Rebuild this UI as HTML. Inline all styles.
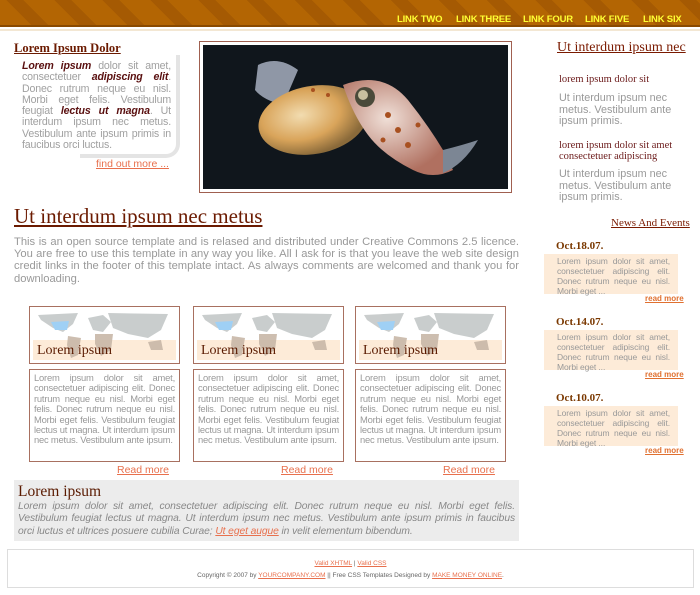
<!DOCTYPE html>
<html><head><meta charset="utf-8">
<style>
*{margin:0;padding:0;box-sizing:border-box}
body{width:700px;height:595px;background:#fff;position:relative;overflow:hidden;font-family:"Liberation Sans",sans-serif;color:#999}
.a{position:absolute}
.serif{font-family:"Liberation Serif",serif}
#hdr{left:0;top:0;width:700px;height:27px;background:repeating-linear-gradient(45deg,#b36503 0 22px,#a55a03 22px 34px);border-bottom:2px solid #8a4a00}
.nav{top:14px;font-size:9.5px;font-weight:bold;color:#ffff33;letter-spacing:-0.2px}
.gt{font-size:10.6px;line-height:11.3px;text-align:justify;color:#a0a0a0;letter-spacing:-0.15px}
.gt b{color:#5a1010;font-style:italic}
.lnk{color:#e8704d;text-decoration:underline}
.box{border:1px solid #a87060}
.mt{font-size:9.4px;line-height:10.4px;text-align:justify;color:#999;letter-spacing:-0.2px}
.rt{font-size:10.8px;line-height:11.5px;color:#999}
.rh{font-size:10.5px;line-height:11px;color:#6b1a1a}
.nd{font-size:11px;font-weight:bold;color:#7a3800}
.nb{background:#fdebd8;font-size:8.5px;line-height:10px;color:#999;text-align:justify;padding:2px 8px 0 13px;letter-spacing:-0.1px}
.rm{font-size:8px;color:#e07030;text-decoration:underline;font-weight:bold}
</style></head><body>
<div id="hdr" class="a"></div><div class="a" style="left:0;top:29px;width:700px;height:2px;background:#f3e7d3"></div>
<div class="a nav" style="left:397px">LINK TWO</div>
<div class="a nav" style="left:456px">LINK THREE</div>
<div class="a nav" style="left:523px">LINK FOUR</div>
<div class="a nav" style="left:585px">LINK FIVE</div>
<div class="a nav" style="left:643px">LINK SIX</div>

<div class="a serif" style="left:14px;top:41px;font-size:12.5px;font-weight:bold;color:#6b1a00;text-decoration:underline">Lorem Ipsum Dolor</div>
<div class="a" style="left:80px;top:55px;width:100px;height:103px;border-right:4px solid #e4e4e4;border-bottom:4px solid #e4e4e4;border-radius:0 0 14px 0"></div>
<div class="a gt" style="left:22px;top:61px;width:149px">
<b>Lorem ipsum</b> dolor sit amet, consectetuer <b>adipiscing elit</b>. Donec rutrum neque eu nisl. Morbi eget felis. Vestibulum feugiat <b>lectus ut magna</b>. Ut interdum ipsum nec metus. Vestibulum ante ipsum primis in faucibus orci luctus.</div>
<div class="a lnk" style="left:96px;top:158px;font-size:10.5px">find out more ...</div>

<div class="a" style="left:199px;top:41px;width:313px;height:152px;border:1px solid #a06050;padding:3px">
<svg width="305" height="144" viewBox="0 0 305 144" style="display:block">
<defs><radialGradient id="bd" cx="40%" cy="40%" r="60%"><stop offset="0" stop-color="#f2dcb0"/><stop offset="0.6" stop-color="#d9a45a"/><stop offset="1" stop-color="#8a6a3a"/></radialGradient>
<radialGradient id="hd" cx="40%" cy="40%" r="60%"><stop offset="0" stop-color="#f0e0d8"/><stop offset="1" stop-color="#b07060"/></radialGradient></defs>
<rect width="305" height="144" fill="#10161c"/>
<path d="M55 20 Q75 10 95 25 L80 60 Q60 55 52 45Z" fill="#8f97a6"/>
<ellipse cx="110" cy="75" rx="55" ry="34" fill="url(#bd)" transform="rotate(-10 110 75)"/>
<path d="M140 40 Q180 25 205 55 Q225 80 240 105 L250 125 Q230 135 210 125 Q180 110 165 90 Q150 70 140 40Z" fill="url(#hd)"/>
<path d="M240 105 Q260 100 275 95 Q260 120 240 128Z" fill="#7c8694"/>
<circle cx="162" cy="52" r="10" fill="#4a4a3a"/><circle cx="160" cy="50" r="5" fill="#c8c0a0"/>
<g fill="#a85020"><circle cx="185" cy="70" r="3"/><circle cx="195" cy="85" r="3"/><circle cx="205" cy="100" r="3"/><circle cx="180" cy="95" r="2.5"/><circle cx="215" cy="80" r="2.5"/><circle cx="125" cy="50" r="2"/><circle cx="110" cy="45" r="2"/></g>
</svg></div>

<div class="a serif" style="left:557px;top:40px;font-size:14px;color:#7a1a00;text-decoration:underline">Ut interdum ipsum nec</div>
<div class="a serif rh" style="left:559px;top:74px">lorem ipsum dolor sit</div>
<div class="a rt" style="left:559px;top:93px;width:120px">Ut interdum ipsum nec metus. Vestibulum ante ipsum primis.</div>
<div class="a serif rh" style="left:559px;top:140px;width:135px">lorem ipsum dolor sit amet consectetuer adipiscing</div>
<div class="a rt" style="left:559px;top:169px;width:120px">Ut interdum ipsum nec metus. Vestibulum ante ipsum primis.</div>

<div class="a serif" style="left:611px;top:217px;font-size:11px;color:#7a1a00;text-decoration:underline">News And Events</div>
<div class="a serif nd" style="left:556px;top:240px">Oct.18.07.</div>
<div class="a nb" style="left:544px;top:254px;width:134px;height:40px">Lorem ipsum dolor sit amet, consectetuer adipiscing elit. Donec rutrum neque eu nisl. Morbi eget ...</div>
<div class="a rm" style="left:645px;top:294px">read more</div>
<div class="a serif nd" style="left:556px;top:316px">Oct.14.07.</div>
<div class="a nb" style="left:544px;top:330px;width:134px;height:40px">Lorem ipsum dolor sit amet, consectetuer adipiscing elit. Donec rutrum neque eu nisl. Morbi eget ...</div>
<div class="a rm" style="left:645px;top:370px">read more</div>
<div class="a serif nd" style="left:556px;top:392px">Oct.10.07.</div>
<div class="a nb" style="left:544px;top:406px;width:134px;height:40px">Lorem ipsum dolor sit amet, consectetuer adipiscing elit. Donec rutrum neque eu nisl. Morbi eget ...</div>
<div class="a rm" style="left:645px;top:446px">read more</div>

<div class="a serif" style="left:14px;top:204px;font-size:21px;color:#6b1a00;text-decoration:underline">Ut interdum ipsum nec metus</div>
<div class="a gt" style="left:14px;top:236px;width:505px;font-size:11.2px;line-height:12.2px;color:#999;letter-spacing:0">This is an open source template and is relased and distributed under Creative Commons 2.5 licence. You are free to use this template in any way you like. All I ask for is that you leave the web site design credit links in the footer of this template intact. As always comments are welcomed and thank you for downloading.</div>

<div class="a box" style="left:29px;top:306px;width:151px;height:58px;padding:3px"><svg width="143" height="50" viewBox="0 0 143 50" style="display:block"><rect width="143" height="50" fill="#fff"/><rect y="30" width="143" height="20" fill="#fdebd8"/><g fill="#c4c8c8" opacity=".9"><path d="M5 5 L45 3 L40 14 L30 22 L20 18 L8 10Z"/><path d="M35 26 L48 28 L45 45 L38 48 L34 35Z" fill="#c8b8a8"/><path d="M55 8 L70 5 L78 12 L70 22 L60 20Z"/><path d="M62 24 L80 24 L78 40 L68 46 L62 34Z" fill="#c8b8a8"/><path d="M75 3 L135 4 L128 20 L115 28 L95 24 L80 18Z"/><path d="M115 32 L128 30 L130 40 L118 40Z" fill="#c8b8a8"/></g><path d="M18 12 L36 11 L34 20 L22 20Z" fill="#9fd0f5"/></svg></div>
<div class="a box" style="left:193px;top:306px;width:151px;height:58px;padding:3px"><svg width="143" height="50" viewBox="0 0 143 50" style="display:block"><rect width="143" height="50" fill="#fff"/><rect y="30" width="143" height="20" fill="#fdebd8"/><g fill="#c4c8c8" opacity=".9"><path d="M5 5 L45 3 L40 14 L30 22 L20 18 L8 10Z"/><path d="M35 26 L48 28 L45 45 L38 48 L34 35Z" fill="#c8b8a8"/><path d="M55 8 L70 5 L78 12 L70 22 L60 20Z"/><path d="M62 24 L80 24 L78 40 L68 46 L62 34Z" fill="#c8b8a8"/><path d="M75 3 L135 4 L128 20 L115 28 L95 24 L80 18Z"/><path d="M115 32 L128 30 L130 40 L118 40Z" fill="#c8b8a8"/></g><path d="M18 12 L36 11 L34 20 L22 20Z" fill="#9fd0f5"/></svg></div>
<div class="a box" style="left:355px;top:306px;width:151px;height:58px;padding:3px"><svg width="143" height="50" viewBox="0 0 143 50" style="display:block"><rect width="143" height="50" fill="#fff"/><rect y="30" width="143" height="20" fill="#fdebd8"/><g fill="#c4c8c8" opacity=".9"><path d="M5 5 L45 3 L40 14 L30 22 L20 18 L8 10Z"/><path d="M35 26 L48 28 L45 45 L38 48 L34 35Z" fill="#c8b8a8"/><path d="M55 8 L70 5 L78 12 L70 22 L60 20Z"/><path d="M62 24 L80 24 L78 40 L68 46 L62 34Z" fill="#c8b8a8"/><path d="M75 3 L135 4 L128 20 L115 28 L95 24 L80 18Z"/><path d="M115 32 L128 30 L130 40 L118 40Z" fill="#c8b8a8"/></g><path d="M18 12 L36 11 L34 20 L22 20Z" fill="#9fd0f5"/></svg></div>
<div class="a serif" style="left:37px;top:343px;font-size:14px;color:#5a1a00">Lorem ipsum</div>
<div class="a serif" style="left:201px;top:343px;font-size:14px;color:#5a1a00">Lorem ipsum</div>
<div class="a serif" style="left:363px;top:343px;font-size:14px;color:#5a1a00">Lorem ipsum</div>

<div class="a box mt" style="left:29px;top:369px;width:151px;height:93px;padding:3px 4px">Lorem ipsum dolor sit amet, consectetuer adipiscing elit. Donec rutrum neque eu nisl. Morbi eget felis. Donec rutrum neque eu nisl. Morbi eget felis. Vestibulum feugiat lectus ut magna. Ut interdum ipsum nec metus. Vestibulum ante ipsum.</div>
<div class="a box mt" style="left:193px;top:369px;width:151px;height:93px;padding:3px 4px">Lorem ipsum dolor sit amet, consectetuer adipiscing elit. Donec rutrum neque eu nisl. Morbi eget felis. Donec rutrum neque eu nisl. Morbi eget felis. Vestibulum feugiat lectus ut magna. Ut interdum ipsum nec metus. Vestibulum ante ipsum.</div>
<div class="a box mt" style="left:355px;top:369px;width:151px;height:93px;padding:3px 4px">Lorem ipsum dolor sit amet, consectetuer adipiscing elit. Donec rutrum neque eu nisl. Morbi eget felis. Donec rutrum neque eu nisl. Morbi eget felis. Vestibulum feugiat lectus ut magna. Ut interdum ipsum nec metus. Vestibulum ante ipsum.</div>
<div class="a lnk" style="left:117px;top:464px;font-size:10.5px">Read more</div>
<div class="a lnk" style="left:281px;top:464px;font-size:10.5px">Read more</div>
<div class="a lnk" style="left:443px;top:464px;font-size:10.5px">Read more</div>

<div class="a" style="left:14px;top:480px;width:505px;height:61px;background:#ececec;padding:3px 4px">
<div class="serif" style="font-size:15.5px;color:#5a1a00;line-height:18px">Lorem ipsum</div>
<div style="font-size:10.3px;line-height:12.3px;font-style:italic;color:#888;text-align:justify;letter-spacing:-0.1px">Lorem ipsum dolor sit amet, consectetuer adipiscing elit. Donec rutrum neque eu nisl. Morbi eget felis. Vestibulum feugiat lectus ut magna. Ut interdum ipsum nec metus. Vestibulum ante ipsum primis in faucibus orci luctus et ultrices posuere cubilia Curae; <span class="lnk">Ut eget augue</span> in velit elementum bibendum.</div></div>

<div class="a" style="left:7px;top:549px;width:687px;height:39px;border:1px solid #ddd;text-align:center;font-size:6.5px;color:#666">
<div style="margin-top:10px"><span class="lnk">Valid XHTML</span> | <span class="lnk">Valid CSS</span></div>
<div style="margin-top:5px">Copyright © 2007 by <span class="lnk">YOURCOMPANY.COM</span> || Free CSS Templates Designed by <span class="lnk">MAKE MONEY ONLINE</span>.</div></div>
</body></html>
